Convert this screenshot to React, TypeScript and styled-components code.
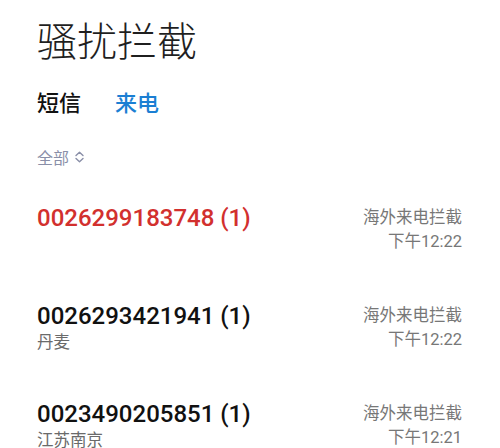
import styled, { createGlobalStyle } from 'styled-components';

const GlobalStyle = createGlobalStyle`
	html, body {
		margin: 0;
		padding: 0;
		background: #ffffff;
	}
	body {
		font-family: Roboto, "Noto Sans CJK SC", sans-serif;
	}
`;

const Page = styled.div`
	width: 500px;
	height: 448px;
	overflow: hidden;
	padding: 19px 38px 0 37px;
	box-sizing: border-box;
	background: #fff;
`;

const Title = styled.h1`
	margin: 0;
	font-family: "Noto Sans CJK SC", sans-serif;
	font-size: 40px;
	font-weight: 300;
	line-height: 40px;
	color: #1f1f1f;
`;

const Tabs = styled.div`
	display: flex;
	gap: 34px;
	margin-top: 31px;
`;

const Tab = styled.div<{ $active?: boolean }>`
	font-family: "Noto Sans CJK SC", sans-serif;
	font-size: 22px;
	line-height: 22px;
	font-weight: 500;
	color: ${({ $active }) => ($active ? '#1b7fd3' : '#111')};
`;

const Filter = styled.div`
	display: flex;
	align-items: center;
	gap: 6px;
	margin-top: 37px;
	font-family: "Noto Sans CJK SC", sans-serif;
	font-size: 16px;
	line-height: 16px;
	color: #8a8fa8;
`;

const List = styled.div`
	margin-top: 15px;
`;

const Row = styled.div`
	display: flex;
	justify-content: space-between;
	align-items: flex-start;
	height: 98px;
	box-sizing: border-box;
	padding-top: 25px;
`;

const Left = styled.div`
	display: flex;
	flex-direction: column;
`;

const Number = styled.div<{ $blocked?: boolean }>`
	font-size: 24px;
	line-height: 26px;
	font-weight: 500;
	color: ${({ $blocked }) => ($blocked ? '#d2302e' : '#111')};
`;

const Place = styled.div`
	margin-top: 4px;
	font-size: 16.5px;
	line-height: 20px;
	color: #6a6a6a;
`;

const Right = styled.div`
	display: flex;
	flex-direction: column;
	align-items: flex-end;
	padding-top: 1px;
	font-size: 16.5px;
	line-height: 24px;
	color: #777;
`;

interface Call {
	number: string;
	count: number;
	place?: string;
	time: string;
	blocked?: boolean;
}

const calls: Call[] = [
	{ number: '0026299183748', count: 1, time: '下午12:22', blocked: true },
	{ number: '0026293421941', count: 1, place: '丹麦', time: '下午12:22' },
	{ number: '0023490205851', count: 1, place: '江苏南京', time: '下午12:21' },
];

const UpDown = () => (
	<svg width="9" height="12" viewBox="0 0 9 12" fill="none" stroke="#8a8fa8" strokeWidth="1.4" strokeLinecap="round" strokeLinejoin="round">
		<polyline points="1,4.5 4.5,1.2 8,4.5" />
		<polyline points="1,7.5 4.5,10.8 8,7.5" />
	</svg>
);

const App = () => (
	<Page>
		<GlobalStyle />
		<Title>骚扰拦截</Title>
		<Tabs>
			<Tab>短信</Tab>
			<Tab $active>来电</Tab>
		</Tabs>
		<Filter>
			全部
			<UpDown />
		</Filter>
		<List>
			{calls.map((c) => (
				<Row key={c.number}>
					<Left>
						<Number $blocked={c.blocked}>
							{c.number} ({c.count})
						</Number>
						{c.place && <Place>{c.place}</Place>}
					</Left>
					<Right>
						<span>海外来电拦截</span>
						<span>{c.time}</span>
					</Right>
				</Row>
			))}
		</List>
	</Page>
);

export default App;
